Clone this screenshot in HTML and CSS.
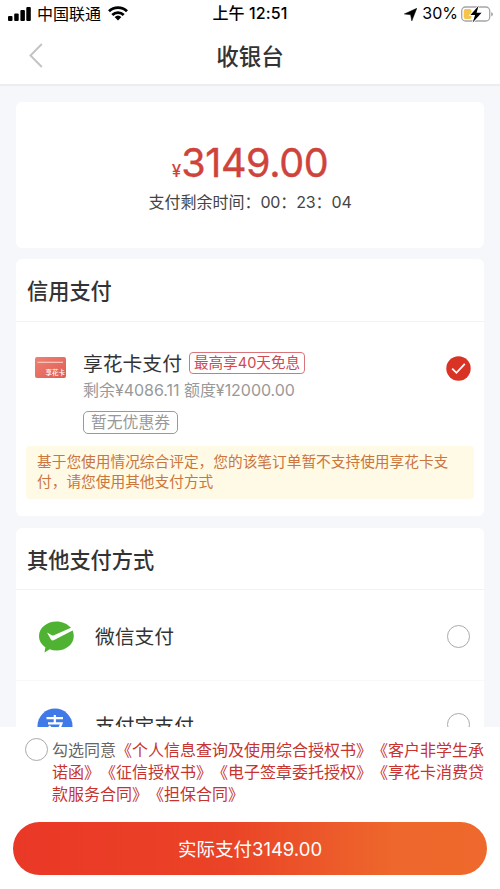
FILE: index.html
```html
<!DOCTYPE html>
<html lang="zh-CN">
<head>
<meta charset="utf-8">
<meta name="viewport" content="width=device-width, initial-scale=1">
<title>收银台</title>
<link rel="stylesheet" href="styles.css">
</head>
<body>
<div class="screen">
  <header class="status">
    <div class="status-left">
      <svg class="signal" width="23" height="15" viewBox="0 0 23 15"><rect x="0" y="10" width="4.500" height="5" rx="1"/><rect x="6.200" y="7.500" width="4.500" height="7.500" rx="1"/><rect x="12.400" y="4" width="4.500" height="11" rx="1"/><rect x="18.300" y="1" width="4.500" height="14" rx="1"/></svg>
      <span class="carrier">中国联通</span>
      <svg class="wifi" width="20" height="15" viewBox="0 0 20 15"><g fill="none" stroke="#000" stroke-width="2.800"><path d="M1 5.300a13 13 0 0 1 18 0"/><path d="M4.300 9a8.200 8.200 0 0 1 11.400 0"/></g><path d="M6.600 11.100a5 5 0 0 1 6.800 0L10 14.600z"/></svg>
    </div>
    <div class="clock">上午 12:51</div>
    <div class="status-right">
      <svg class="locate" width="13" height="13" viewBox="0 0 13 13"><path d="M12.800.3 7.800 12.900 6.600 6.700.3 6z" stroke="#000" stroke-width=".5"/></svg>
      <span class="percent">30%</span>
      <svg class="battery" width="33" height="18" viewBox="0 0 33 18"><rect x=".7" y="2" width="28" height="14" rx="3.800" fill="#fff" stroke="#a5a5a5" stroke-width="1.300"/><rect x="2.700" y="4" width="7.800" height="10" rx="2" fill="#f4c548"/><path d="M30.200 7v4.500q1.800-.7 1.800-2.250T30.200 7z" fill="#a5a5a5"/><path d="M17.600.7 9.400 10h4.700l-2.400 7.500L20.600 7.700h-5z" fill="#000" stroke="#fff" stroke-width="1.600" paint-order="stroke"/></svg>
    </div>
  </header>
  <nav class="nav">
    <svg class="back" width="14" height="25" viewBox="0 0 14 25"><path d="M12.800 1 1.500 12.500 12.800 24" fill="none" stroke="#c4c4c4" stroke-width="2"/></svg>
    <h1 class="title">收银台</h1>
  </nav>
  <main class="content">
    <section class="card summary">
      <div class="amount"><span class="yen">¥</span><span class="figure">3149.00</span></div>
      <div class="countdown">支付剩余时间：<span class="digits">00</span>：<span class="digits">23</span>：<span class="digits">04</span></div>
    </section>
    <section class="card credit">
      <h2 class="heading">信用支付</h2>
      <div class="plan">
        <svg class="bank" width="31" height="21" viewBox="0 0 31 21"><defs><linearGradient id="card" x1="0" y1="0" x2="1" y2="1"><stop offset="0" stop-color="#ee8173"/><stop offset="1" stop-color="#e05b52"/></linearGradient></defs><rect width="31" height="21" rx="2" fill="url(#card)"/><path d="M2.500 5.300H28" stroke="#f9c9c0" stroke-width="1.200"/><text class="bank-name" x="10.500" y="17.700">享花卡</text></svg>
        <div class="plan-info">
          <div class="plan-title"><span class="plan-name">享花卡支付</span><span class="tag">最高享40天免息</span></div>
          <div class="balance">剩余¥4086.11 额度¥12000.00</div>
          <span class="coupon">暂无优惠券</span>
        </div>
        <svg class="checked" width="25" height="25" viewBox="0 0 25 25"><circle cx="12.500" cy="12.500" r="12.200" fill="#d93325"/><path d="m6.200 12.700 4.200 4.100 8.400-9" fill="none" stroke="#fff" stroke-width="1.800"/></svg>
      </div>
      <p class="notice">基于您使用情况综合评定，您的该笔订单暂不支持使用享花卡支付，请您使用其他支付方式</p>
    </section>
    <section class="card others">
      <h2 class="heading">其他支付方式</h2>
      <div class="method">
        <svg class="logo" width="36" height="32" viewBox="0 0 36 32"><path d="M18.500.5C9 .5 1 6.800 1 15c0 4.700 2.500 8.700 6.400 11.300L6.500 31.500l5.200-3.200c2 .8 4.300 1.200 6.800 1.200 9.700 0 17.300-6.300 17.300-14.500 0-2-.4-3.800-1.200-5.500L16.100 19c-.9.600-2.300.600-3-.2L9 11.500l4.900 2.700c.7.300 1.300.300 2 0L33 6.800C29.500 2.800 24.200.5 18.500.5z" fill="#50b233"/></svg>
        <span class="method-name">微信支付</span>
        <span class="radio"></span>
      </div>
      <div class="method clipped">
        <svg class="logo" width="36" height="36" viewBox="0 0 36 36"><circle cx="18" cy="18" r="17.500" fill="#4079e8"/><path d="M9.500 10.200h16.500M17.800 7v8.500M11 15.400h13.500c-2 6-7 11-16 13M12 18c4 5 9 8 16 10" fill="none" stroke="#fff" stroke-width="2.200"/></svg>
        <span class="method-name">支付宝支付</span>
        <span class="radio"></span>
      </div>
    </section>
  </main>
  <footer class="footer">
    <div class="agreement">
      <span class="radio agree"></span>
      <p class="terms">勾选同意<span class="links">《个人信息查询及使用综合授权书》《客户非学生承诺函》《征信授权书》《电子签章委托授权》《享花卡消费贷款服务合同》《担保合同》</span></p>
    </div>
    <button class="pay">实际支付<span class="pay-sum">3149.00</span></button>
  </footer>
</div>
</body>
</html>
```
FILE: styles.css
```css
* { box-sizing: border-box; }
body, h1, h2, p { margin: 0; }
body {
  font-family: Inter, "Noto Sans CJK SC", sans-serif;
  color: #333;
  background: #fff;
  text-spacing-trim: space-all;
}
svg { display: block; flex: none; }
.screen { height: 889px; display: flex; flex-direction: column; overflow: hidden; }

.status {
  flex: none;
  height: 28px;
  display: grid;
  grid-template-columns: 1fr auto 1fr;
  align-items: center;
  padding: 0 6px 0 8px;
  color: #000;
  font-size: 16px;
  line-height: 26px;
  white-space: nowrap;
}
.status-left, .status-right { display: flex; align-items: center; }
.status-right { justify-content: flex-end; }
.signal { margin-top: -1px; }
.wifi { margin-top: -1px; }
.locate { margin-top: 1px; }
.battery { margin-top: -1px; }
.carrier { margin: 0 7px 0 6px; }
.clock { font-weight: 500; font-size: 16px; letter-spacing: .1px; margin: -2px 0 0 -2px; }
.percent { margin: -2px 3px 0 5px; font-size: 16px; }

.nav {
  flex: none;
  height: 58px;
  display: grid;
  grid-template-columns: 1fr auto 1fr;
  align-items: center;
  padding: 0 0 1px 29px;
  border-bottom: 2px solid #ebedef;
}
.nav::after { content: ""; width: 29px; }
.title { font-size: 22.5px; line-height: 30px; font-weight: 500; margin: 2px 0 0 -29px; }

.content {
  flex: 1;
  min-height: 0;
  overflow: hidden;
  background: #f5f7fa;
  padding: 16px 16px 0;
}
.card { background: #fff; border-radius: 6px; }
.summary { height: 146px; padding-top: 36px; text-align: center; }
.amount { height: 50px; line-height: 50px; color: #cf433d; white-space: nowrap; }
.yen { font-size: 17px; font-weight: 500; }
.figure { font-size: 39.5px; font-weight: 400; -webkit-text-stroke: .4px #cf433d; letter-spacing: -.4px; }
.countdown { margin-top: 2px; font-size: 16px; line-height: 24px; color: #444; }
.digits { letter-spacing: -.2px; }

.heading { font-size: 21.200px; line-height: 65px; font-weight: 500; padding-left: 11px; border-bottom: 1px solid #f3f3f3; }
.credit { height: 257px; margin-top: 11px; }
.credit .heading { height: 63px; }
.plan { display: flex; padding: 28px 13px 0 19px; height: 124px; }
.bank { margin-top: 7px; }
.bank-name { font-size: 6.500px; fill: #fff; font-weight: 500; }
.plan-info { flex: 1; margin-left: 17px; }
.plan-title { display: flex; align-items: center; height: 28px; }
.plan-name { font-size: 19.8px; line-height: 28px; }
.tag {
  height: 22px;
  margin: -3px 0 0 7px;
  padding: 0 4px;
  border: 1px solid #d9747a;
  border-radius: 4px;
  color: #cf4a50;
  font-size: 14.600px;
  line-height: 21px;
}
.balance { font-size: 16px; line-height: 25px; color: #999; letter-spacing: -.03px; }
.coupon {
  display: block;
  width: 95px;
  height: 23px;
  margin-top: 8px;
  border: 1.500px solid #999;
  border-radius: 5px;
  color: #999;
  font-size: 15.800px;
  line-height: 22px;
  text-align: center;
}
.checked { margin-top: 6px; }
.notice {
  height: 53px;
  margin: 0 10px;
  padding: 6px 11px;
  border-radius: 4px;
  background: #fefae5;
  color: #cb753f;
  font-size: 14.700px;
  line-height: 20.300px;
}

.others { height: 300px; margin-top: 12px; }
.others .heading { height: 62px; line-height: 65px; }
.method { display: flex; align-items: center; height: 91px; padding: 3px 14px 0 22px; border-bottom: 1px solid #f8f8f8; }
.clipped { padding: 0 14px 1px 21px; }
.clipped .method-name { margin-left: 22px; }
.method-name { flex: 1; margin-left: 21px; font-size: 19.800px; line-height: 28px; }
.radio { flex: none; width: 23px; height: 23px; border: 1.500px solid #aaa; border-radius: 50%; }
.clipped .radio { margin-top: -2px; }

.footer { flex: none; height: 162px; padding: 11px 13px 14px; background: #fff; }
.agreement { display: flex; height: 84px; padding-left: 12px; }
.agree { margin-right: 4px; }
.terms {
  width: 433px;
  padding-top: 1px;
  font-size: 16px;
  line-height: 22.200px;
  color: #666;
  line-break: anywhere;
  flex: none;
}
.links { color: #c8322f; }
.pay {
  display: block;
  width: 474px;
  height: 53px;
  border: 0;
  padding: 2px 0 0;
  border-radius: 27px;
  background: linear-gradient(90deg, #ea3826 0%, #ea4327 45%, #ee672c 80%, #ee692d 100%);
  color: #fff;
  font: 400 18.500px/51px Inter, "Noto Sans CJK SC", sans-serif;
}
```
